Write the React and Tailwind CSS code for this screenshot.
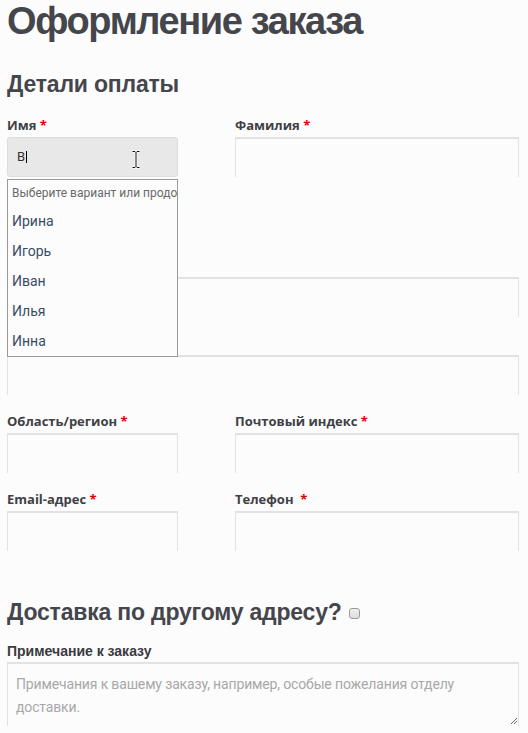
import React from "react";

const LABEL = "font-['Open_Sans',sans-serif] font-bold text-[13px] leading-[18px] h-[18px] mb-[3px] text-[#3f3f46] whitespace-nowrap";
const INPUT = "h-[40px] border-t-2 border-x border-b-0 border-[#e2e2e2] bg-[#fcfcfc]";

function Req() {
  return <span className="text-[#e00000]"> *</span>;
}

function Field({ label, req, children, className = "" }) {
  return (
    <div className={className}>
      <div className={LABEL}>
        {label}
        {req && <Req />}
      </div>
      {children || <div className={INPUT} />}
    </div>
  );
}

function Cursor() {
  return (
    <svg className="absolute left-[122px] top-[12px]" width="12" height="19" viewBox="0 0 12 19">
      <path d="M2.5 1.5 H5 L6 2.5 L7 1.5 H9.5 M6 2.5 V16.5 M2.5 17.5 H5 L6 16.5 L7 17.5 H9.5" fill="none" stroke="#fff" strokeWidth="2.5" />
      <path d="M2.5 1.5 H5 L6 2.5 L7 1.5 H9.5 M6 2.5 V16.5 M2.5 17.5 H5 L6 16.5 L7 17.5 H9.5" fill="none" stroke="#111" strokeWidth="1" />
    </svg>
  );
}

export default function App() {
  const names = ["Ирина", "Игорь", "Иван", "Илья", "Инна"];
  return (
    <div className="min-h-screen bg-[#fcfcfc] pl-[7px] pr-[9px] pb-[8px] font-['Liberation_Sans',sans-serif]">
      <h1 className="text-[38px] leading-[42px] font-bold text-[#45464c] tracking-[-1.4px]">Оформление заказа</h1>
      <h2 className="mt-[28px] text-[23px] leading-[28px] font-bold text-[#45464c] tracking-[-0.2px]">Детали оплаты</h2>

      <div className="mt-[18px] grid grid-cols-[171px_1fr] gap-x-[57px]">
        <div className="relative z-10">
          <div className={LABEL}>
            Имя<Req />
          </div>
          <div className="relative h-[40px] rounded-[3px] border border-[#dcdcdc] bg-[#e8e8e8] flex items-center pl-[9px]">
            <span className="font-['Roboto',sans-serif] text-[13px] text-[#333]">В</span>
            <span className="ml-px h-[12px] w-px bg-black" />
            <Cursor />
          </div>
          <div className="absolute left-0 top-[63px] w-[171px] h-[178px] border border-[#9a9a9a] bg-[#fcfcfc] overflow-hidden font-['Roboto',sans-serif]">
            <div className="pl-[4px] text-[12px] leading-[26px] text-[#6a6a6a] whitespace-nowrap overflow-hidden">
              Выберите вариант или продолжите ввод
            </div>
            {names.map((n) => (
              <div key={n} className="pl-[4px] text-[14px] leading-[30px] h-[30px] text-[#394c63]">
                {n}
              </div>
            ))}
          </div>
        </div>
        <Field label="Фамилия" req />
      </div>

      <Field label={"\u00a0"} className="mt-[79px]" />
      <Field label={"\u00a0"} className="mt-[17px]" />

      <div className="mt-[17px] grid grid-cols-[171px_1fr] gap-x-[57px] gap-y-[17px]">
        <Field label="Область/регион" req />
        <Field label="Почтовый индекс" req />
        <Field label="Email-адрес" req />
        <Field label={<>Телефон&nbsp;</>} req />
      </div>

      <h2 className="mt-[47px] text-[23px] leading-[28px] font-bold text-[#45464c] tracking-[-0.2px] flex items-center">
        Доставка по другому адресу?
        <span className="ml-[7px] mt-[3px] inline-block h-[11px] w-[11px] rounded-[3px] border border-[#9a9a9a] bg-gradient-to-b from-[#f0f0f0] to-[#dcdcdc]" />
      </h2>

      <div className="mt-[16px] font-bold text-[14px] leading-[18px] h-[18px] mb-[2px] text-[#3a3a40]">
        Примечание к заказу
      </div>
      <div className="relative h-[64px] border-t-2 border-x border-b-0 border-[#e2e2e2] pl-[8px] pt-[9px] font-['Roboto',sans-serif] text-[14px] tracking-[-0.15px] leading-[23px] text-[#a8a8a8]">
        Примечания к вашему заказу, например, особые пожелания отделу доставки.
        <svg className="absolute right-[1px] bottom-[2px]" width="7" height="7" viewBox="0 0 7 7">
          <path d="M1 7 L7 1 M4 7 L7 4" stroke="#666" strokeWidth="1" />
        </svg>
      </div>
    </div>
  );
}
